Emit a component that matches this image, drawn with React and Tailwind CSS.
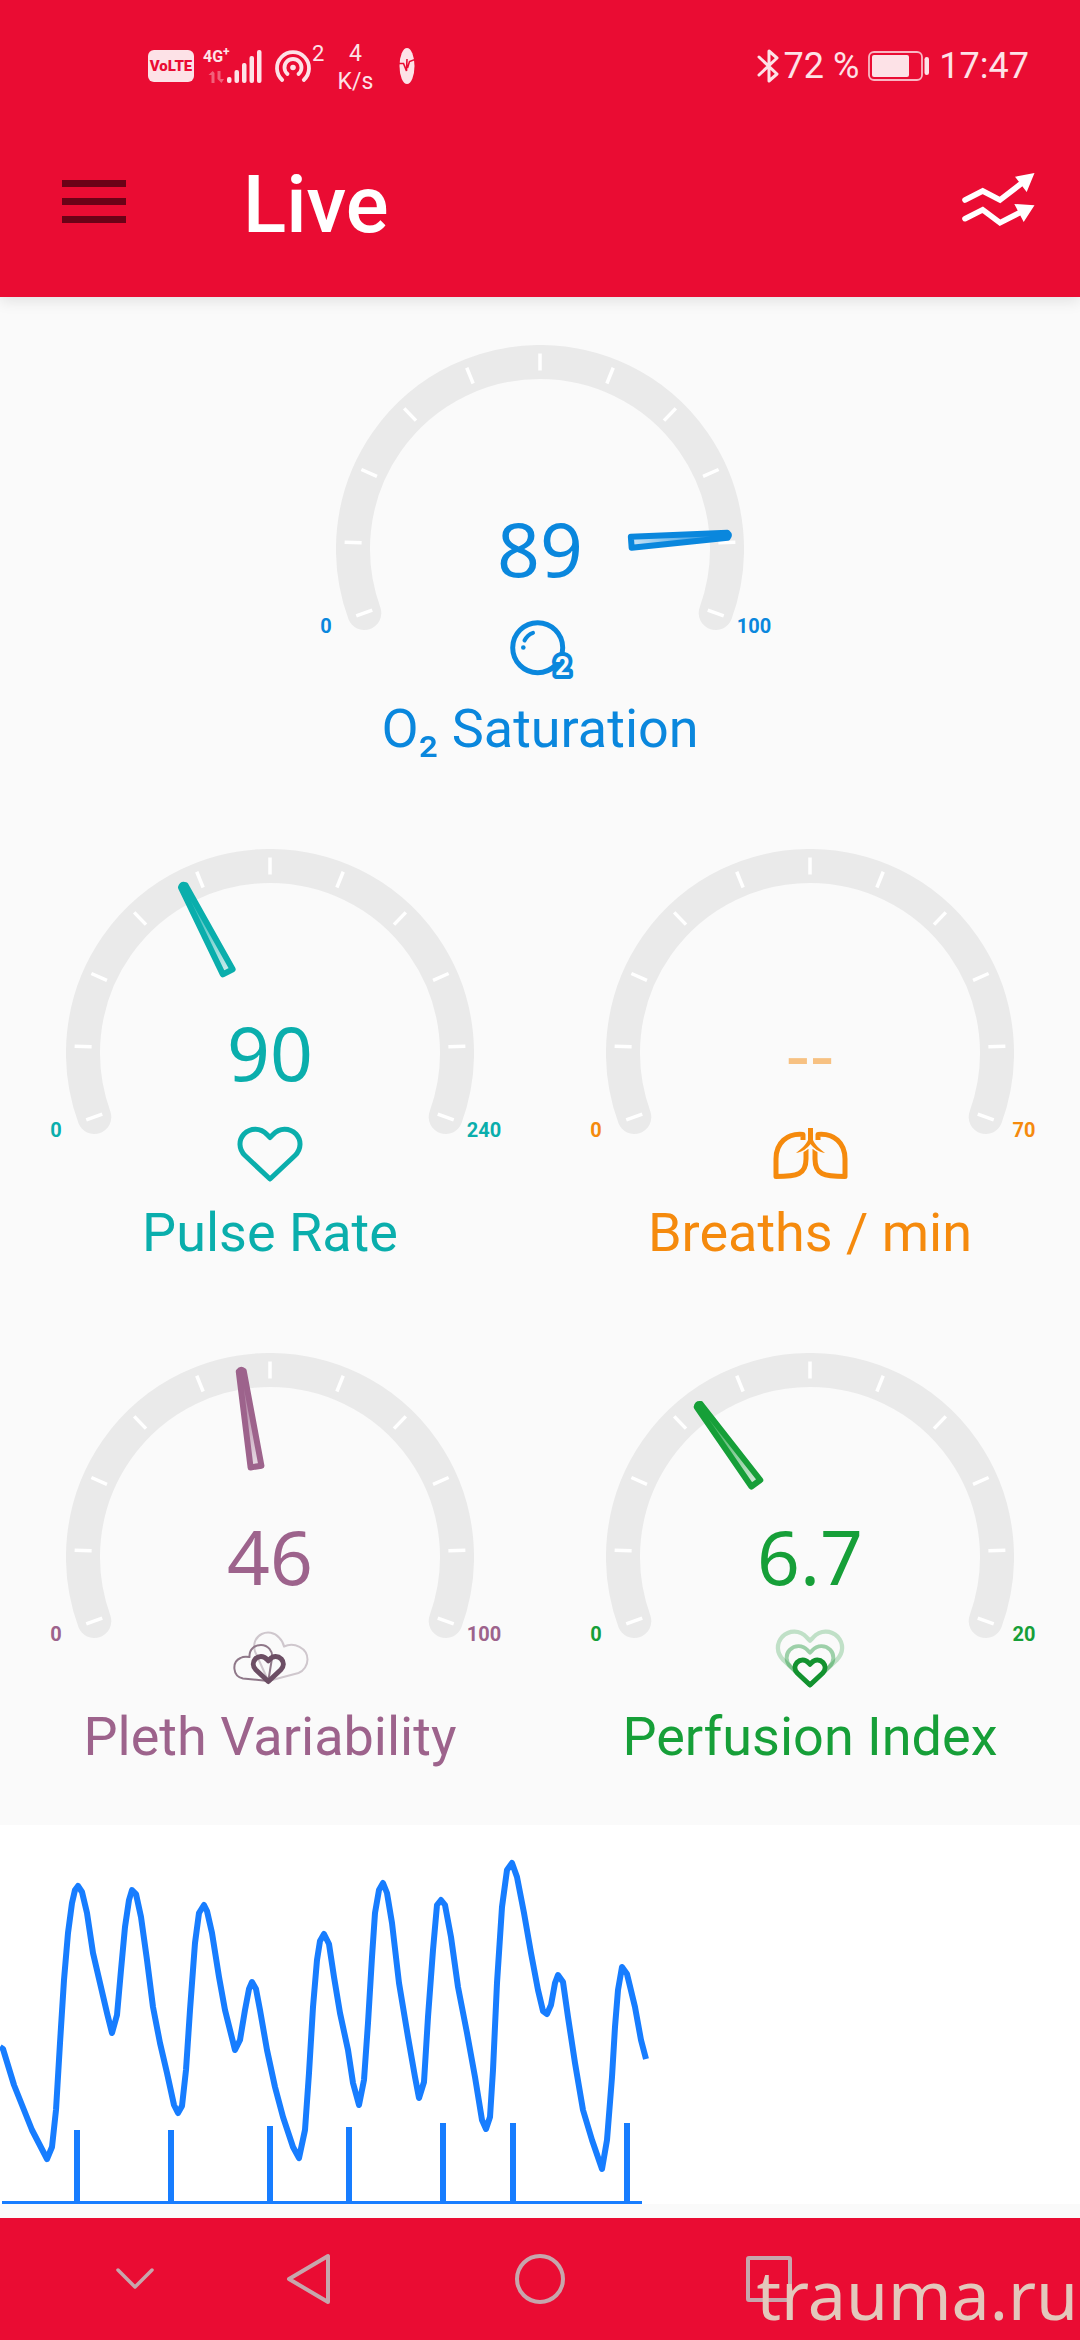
import React from 'react';

const START_ANGLE = -110;
const SWEEP = 220;
const TICKS = [-110, -88, -66, -44, -22, 0, 22, 44, 66, 88, 110];

const HEART = "M40 56 L15 32.5 C8.5 26 8.5 17 14 11 C20.5 4.5 30.5 4.5 37 11.5 L40 14.5 L43 11.5 C49.5 4.5 59.5 4.5 66 11 C71.5 17 71.5 26 65 32.5 Z";

const OxygenIcon = () => (
    <svg className="w-20 h-16" viewBox="0 0 80 64" fill="none">
        <circle cx="37.7" cy="28.7" r="25" stroke="currentColor" strokeWidth="5" />
        <path d="M24.5 21.5 C26.5 17.5 29.5 15 33 13.8" stroke="currentColor" strokeWidth="4" strokeLinecap="round" />
        <circle cx="23.3" cy="28.5" r="2.3" fill="currentColor" />
        <text
            x="62.5"
            y="56"
            textAnchor="middle"
            className="font-[Roboto] font-bold text-[26px] fill-[#fafafa] stroke-current"
            strokeWidth="8"
            strokeLinejoin="round"
            paintOrder="stroke"
        >
            2
        </text>
    </svg>
);

const HeartIcon = () => (
    <svg className="w-20 h-16" viewBox="0 0 80 64" fill="none" stroke="currentColor" strokeLinejoin="round">
        <path d={HEART} strokeWidth="5" />
    </svg>
);

const LungsIcon = () => {
    const lung = "M33 17 V11.5 C17 10 6 20 6 36 V53.5 C16 53.5 24 53 29 50.5 C35 47.5 36 42 36 36 V26";
    return (
        <svg className="w-20 h-16" viewBox="0 0 80 64" fill="none" stroke="currentColor" strokeLinejoin="round">
            <path d={lung} strokeWidth="5" />
            <path d={lung} strokeWidth="5" transform="matrix(-1 0 0 1 81 0)" />
            <path
                d="M38 5 H43 V17 C45 22 50 26 55 30 C48.5 29 43.5 25 40.5 21 C37.5 25 32.5 29 26 30 C31 26 36 22 38 17 Z"
                fill="currentColor"
                stroke="#fafafa"
                strokeWidth="3"
                paintOrder="stroke"
            />
        </svg>
    );
};

const PlethIcon = () => (
    <svg className="w-20 h-16" viewBox="0 0 80 64" fill="none" strokeLinejoin="round">
        <path
            d="M38.3 54 L25 24.5 C20 7 40 0 49 10.5 C52 13.5 53.5 16 54 19.5 C64 14.5 77.5 21 77.5 32.5 C77.5 38 74 44 68.5 46 Z"
            stroke="#cfc7cd"
            strokeWidth="2"
        />
        <path
            d="M38.3 54 L13 51.5 C2.5 49.5 1.5 35 10.5 31 C13 29.5 16.5 29.5 19.5 30 C19 22 25 18 31 18 C38 18 43 24 42 31 Z"
            stroke="#8f7889"
            strokeWidth="2"
        />
        <path d={HEART} stroke="#6c4e64" strokeWidth="10" transform="translate(18.3 26.5) scale(0.5)" />
    </svg>
);

const PerfusionIcon = () => (
    <svg className="w-20 h-16" viewBox="0 0 80 64" fill="none" stroke="#12922f" strokeLinejoin="round">
        <path d={HEART} strokeWidth="4" opacity="0.25" transform="translate(-2.8 -1.9) scale(1.07)" />
        <path d={HEART} strokeWidth="5" opacity="0.4" transform="translate(8.8 14.3) scale(0.78)" />
        <path d={HEART} strokeWidth="10" transform="translate(20 30) scale(0.5)" />
    </svg>
);

const GAUGES = [
    { id: 'spo2', label: 'O₂ Saturation', value: 89, max: 100, color: 'text-[#0a87dd]', icon: OxygenIcon, span: 'col-span-2' },
    { id: 'pulse', label: 'Pulse Rate', value: 90, max: 240, color: 'text-[#0aaeac]', icon: HeartIcon },
    { id: 'breaths', label: 'Breaths / min', value: null, max: 70, color: 'text-[#f58a0d]', icon: LungsIcon },
    { id: 'pleth', label: 'Pleth Variability', value: 46, max: 100, color: 'text-[#9d638c]', icon: PlethIcon },
    { id: 'perfusion', label: 'Perfusion Index', value: 6.7, max: 20, color: 'text-[#169f38]', icon: PerfusionIcon },
];

const Gauge = ({ id, label, value, max, color, icon: Icon, span = "" }) => {
    const hasValue = value !== null;
    const angle = hasValue ? START_ANGLE + (value / max) * SWEEP : 0;

    return (
        <section className={`grid justify-items-center font-[Roboto] ${color} ${span}`}>
            <svg className="col-start-1 row-start-1 w-[408px] h-[288px]" viewBox="0 0 408 288" fill="none">
                <defs>
                    <linearGradient id={`needle-${id}`} x1="0" y1="1" x2="0" y2="0">
                        <stop offset="0" stopColor="currentColor" stopOpacity="0.2" />
                        <stop offset="1" stopColor="currentColor" />
                    </linearGradient>
                </defs>
                <path d="M28.3 268 A187 187 0 1 1 379.7 268" stroke="#eaeaea" strokeWidth="34" strokeLinecap="round" />
                {TICKS.map((tick) => (
                    <path key={tick} d="M204 8.5 V25.5" stroke="#fff" strokeWidth="3.5" transform={`rotate(${tick} 204 204)`} />
                ))}
                {hasValue && (
                    <path
                        d="M201.5 16 Q204 13.5 206.5 16 L209.5 112.5 H198.5 Z"
                        fill={`url(#needle-${id})`}
                        stroke="currentColor"
                        strokeWidth="6"
                        strokeLinejoin="round"
                        transform={`rotate(${angle} 204 204)`}
                    />
                )}
            </svg>
            <div className="col-start-1 row-start-1 self-start w-[468px] mt-[269px] flex justify-between text-[20px] leading-6 font-bold">
                <span className="w-10 text-center">0</span>
                <span className="w-10 text-center">{max}</span>
            </div>
            <div className="col-start-1 row-start-1 flex flex-col items-center pt-[163px]">
                <p className={`font-['Noto_Sans'] text-[75px] leading-[80px] ${hasValue ? "" : "opacity-50"}`}>
                    {hasValue ? value : '--'}
                </p>
                <div className="mt-[31px]">
                    <Icon />
                </div>
                <h2 className="mt-[14px] text-[54px] leading-[64px] whitespace-nowrap">{label}</h2>
            </div>
        </section>
    );
};

const WAVE = [
    [0, 222], [3, 224], [14, 260], [32, 305], [47, 334], [52, 322], [56, 285], [60, 218], [64, 155], [68, 108],
    [72, 78], [75, 65], [78, 61], [82, 67], [87, 88], [93, 128], [100, 158], [107, 188], [112, 208], [117, 190],
    [121, 145], [125, 102], [129, 75], [132, 65], [136, 69], [141, 92], [147, 135], [153, 182], [160, 218], [167, 248],
    [174, 280], [178, 288], [182, 281], [186, 245], [190, 185], [195, 118], [199, 88], [204, 80], [207, 86], [212, 108],
    [219, 152], [225, 185], [232, 213], [235, 225], [240, 215], [245, 185], [249, 164], [252, 157], [256, 164], [260, 185],
    [267, 225], [275, 262], [283, 292], [293, 322], [299, 333], [305, 305], [309, 248], [313, 182], [317, 135], [320, 116],
    [324, 109], [329, 119], [334, 152], [340, 188], [348, 225], [353, 258], [359, 280], [364, 255], [368, 198], [372, 132],
    [375, 88], [379, 65], [383, 58], [387, 68], [392, 98], [399, 158], [408, 212], [415, 252], [419, 273], [424, 257],
    [428, 192], [433, 125], [437, 80], [441, 75], [445, 80], [451, 112], [458, 162], [467, 208], [475, 252], [482, 295],
    [486, 304], [490, 292], [493, 245], [497, 158], [502, 82], [507, 45], [512, 38], [517, 52], [524, 88], [531, 128],
    [538, 165], [543, 186], [547, 189], [551, 180], [555, 158], [558, 150], [563, 157], [568, 192], [575, 238], [583, 285],
    [592, 315], [602, 344], [607, 315], [612, 252], [615, 202], [618, 165], [622, 142], [627, 149], [635, 182], [641, 215],
    [646, 234],
];

// [x, top] of every detected beat
const BEATS = [[77, 305], [171, 305], [270, 301], [349, 302], [443, 298], [513, 298], [627, 298]];

const PlethWave = () => (
    <svg className="block w-full h-auto bg-white" viewBox="0 0 1080 379" fill="none" stroke="#177dff" role="img" aria-label="Pleth waveform">
        <polyline points={WAVE.map((p) => p.join(',')).join(' ')} strokeWidth="6" strokeLinejoin="round" />
        {BEATS.map(([x, top]) => (
            <path key={x} d={`M${x} ${top} V377`} strokeWidth="6" />
        ))}
        <path d="M2 377.5 H642" strokeWidth="3" />
    </svg>
);

const StatusBar = () => (
    <div className="h-[132px] flex items-center justify-between pl-[148px] pr-[51px] font-[Roboto] text-[#fde2e7]">
        <div className="flex items-center">
            <span className="w-[46px] h-8 rounded-md bg-[#fde2e7] text-[#ea0c33] text-[15px] leading-8 font-black text-center">VoLTE</span>
            <div className="relative ml-[9px] w-[60px] h-[34px]">
                <span className="absolute left-0 top-0 text-[16px] leading-4 font-bold">
                    4G<sup className="text-[12px] leading-none">+</sup>
                </span>
                <svg className="w-full h-full" viewBox="0 0 60 34" fill="currentColor">
                    <path d="M8.5 34 V26 H5.5 L9.7 22 L11.5 24 V34 Z M14.5 22 V30 L18.5 34 L21 30 H17.5 V22 Z" opacity="0.4" />
                    <rect x="24" y="28" width="4.5" height="6" rx="2" />
                    <rect x="31.5" y="21" width="4.5" height="13" rx="2" />
                    <rect x="39" y="14" width="4.5" height="20" rx="2" />
                    <rect x="46.5" y="7" width="4.5" height="27" rx="2" />
                    <rect x="54" y="1" width="4.5" height="33" rx="2" />
                </svg>
            </div>
            <svg className="ml-[11px] w-[38px] h-[34px]" viewBox="0 0 38 34" fill="none" stroke="currentColor" strokeWidth="3.8" strokeLinecap="round">
                <path d="M8.2 31 A16 16 0 1 1 29.8 31" />
                <path d="M13.5 25 A8.5 8.5 0 1 1 24.5 25" />
                <circle cx="19" cy="18.5" r="2.8" fill="currentColor" stroke="none" />
            </svg>
            <span className="text-[22px] leading-7 self-start pt-1">2</span>
            <p className="ml-[13px] w-9 pt-1 text-[23px] leading-7 text-center">
                4<br />K/s
            </p>
            <svg className="ml-[26px] w-4 h-9" viewBox="0 0 16 36">
                <ellipse cx="8" cy="18" rx="7.5" ry="18" fill="currentColor" />
                <path d="M0 15.5 H4.5 L7.5 23 L8 11 M8.5 20 L10.5 13.5 L16 11.5" fill="none" stroke="#ea0c33" strokeWidth="1.6" />
            </svg>
        </div>
        <div className="flex items-center text-[36px] leading-10">
            <svg className="w-[22px] h-[34px]" viewBox="0 0 22 34" fill="none" stroke="currentColor" strokeWidth="3" strokeLinejoin="round" strokeLinecap="round">
                <path d="M2 8 L20 25 L12 32 V2 L20 9 L2 26" />
            </svg>
            <span className="ml-[5px]">72 %</span>
            <svg className="ml-[9px] w-[62px] h-[30px]" viewBox="0 0 62 30" fill="none">
                <rect x="1" y="1" width="53" height="28" rx="5" stroke="currentColor" strokeWidth="1.8" opacity="0.8" />
                <rect x="4" y="4" width="37" height="22" rx="2" fill="currentColor" />
                <rect x="56.5" y="6" width="4.5" height="18" rx="2.2" fill="currentColor" />
            </svg>
            <span className="ml-[9px]">17:47</span>
        </div>
    </div>
);

const AppBar = () => (
    <div className="h-[165px] pb-[27px] pl-[62px] pr-[45px] flex items-center">
        <button type="button" aria-label="Menu" className="w-16 flex flex-col gap-[11px]">
            <span className="h-[7px] bg-[#6b0217]" />
            <span className="h-[7px] bg-[#6b0217]" />
            <span className="h-[7px] bg-[#6b0217]" />
        </button>
        <h1 className="ml-[117px] pt-2 flex-1 font-[Roboto] font-medium text-[80px] leading-[80px] text-white">Live</h1>
        <button type="button" aria-label="Trends" className="text-white">
            <svg className="w-[73px] h-[58px]" viewBox="0 0 73 58" fill="none">
                <g stroke="currentColor" strokeWidth="5.6" strokeLinecap="round">
                    <path d="M3 28 L20.7 19 L38 28 L60 11" />
                    <path d="M3 46.7 L20.7 37.7 L38 50.7 L57 41" />
                </g>
                <path d="M72.5 1 L53 4.7 L64.7 20 Z M72.5 33.3 L52.3 32 L61.7 50 Z" fill="currentColor" />
            </svg>
        </button>
    </div>
);

const NavButton = ({ label, children }) => (
    <button type="button" aria-label={label} className="w-16 h-16">
        <svg className="w-16 h-16" viewBox="0 0 64 64" fill="none" stroke="#c7a6ac" strokeWidth="4" strokeLinejoin="round" strokeLinecap="round">
            {children}
        </svg>
    </button>
);

const NavBar = () => (
    <nav className="relative h-[122px] bg-[#ea0c33] grid grid-cols-[1fr_auto_1fr] items-center">
        <div className="flex justify-between pl-[103px] pr-[167px]">
            <NavButton label="Hide keyboard">
                <path d="M15 23 L32 40 L49 23" strokeWidth="3.5" />
            </NavButton>
            <NavButton label="Back">
                <path d="M51 9 V55 L12 32 Z" />
            </NavButton>
        </div>
        <NavButton label="Home">
            <circle cx="32" cy="32" r="23" />
        </NavButton>
        <div className="pl-[165px] flex">
            <NavButton label="Recent apps">
                <rect x="11" y="11" width="42" height="42" rx="1" />
            </NavButton>
        </div>
        <span className="absolute right-0 bottom-0 pr-0.5 font-['Noto_Sans'] text-[68px] leading-[92px] text-[#e3c8bc]">trauma.ru</span>
    </nav>
);

const App = () => {
    return (
        <div className="min-h-screen flex flex-col bg-[#fafafa]">
            <header className="relative bg-[#ea0c33] shadow-[0_4px_14px_rgba(0,0,0,0.1)]">
                <StatusBar />
                <AppBar />
            </header>
            <main className="flex-1 pb-[14px]">
                <div className="grid grid-cols-2 gap-y-[88px] pt-12 pb-14">
                    {GAUGES.map((gauge) => (
                        <Gauge key={gauge.id} {...gauge} />
                    ))}
                </div>
                <PlethWave />
            </main>
            <NavBar />
        </div>
    );
};

export default App;
